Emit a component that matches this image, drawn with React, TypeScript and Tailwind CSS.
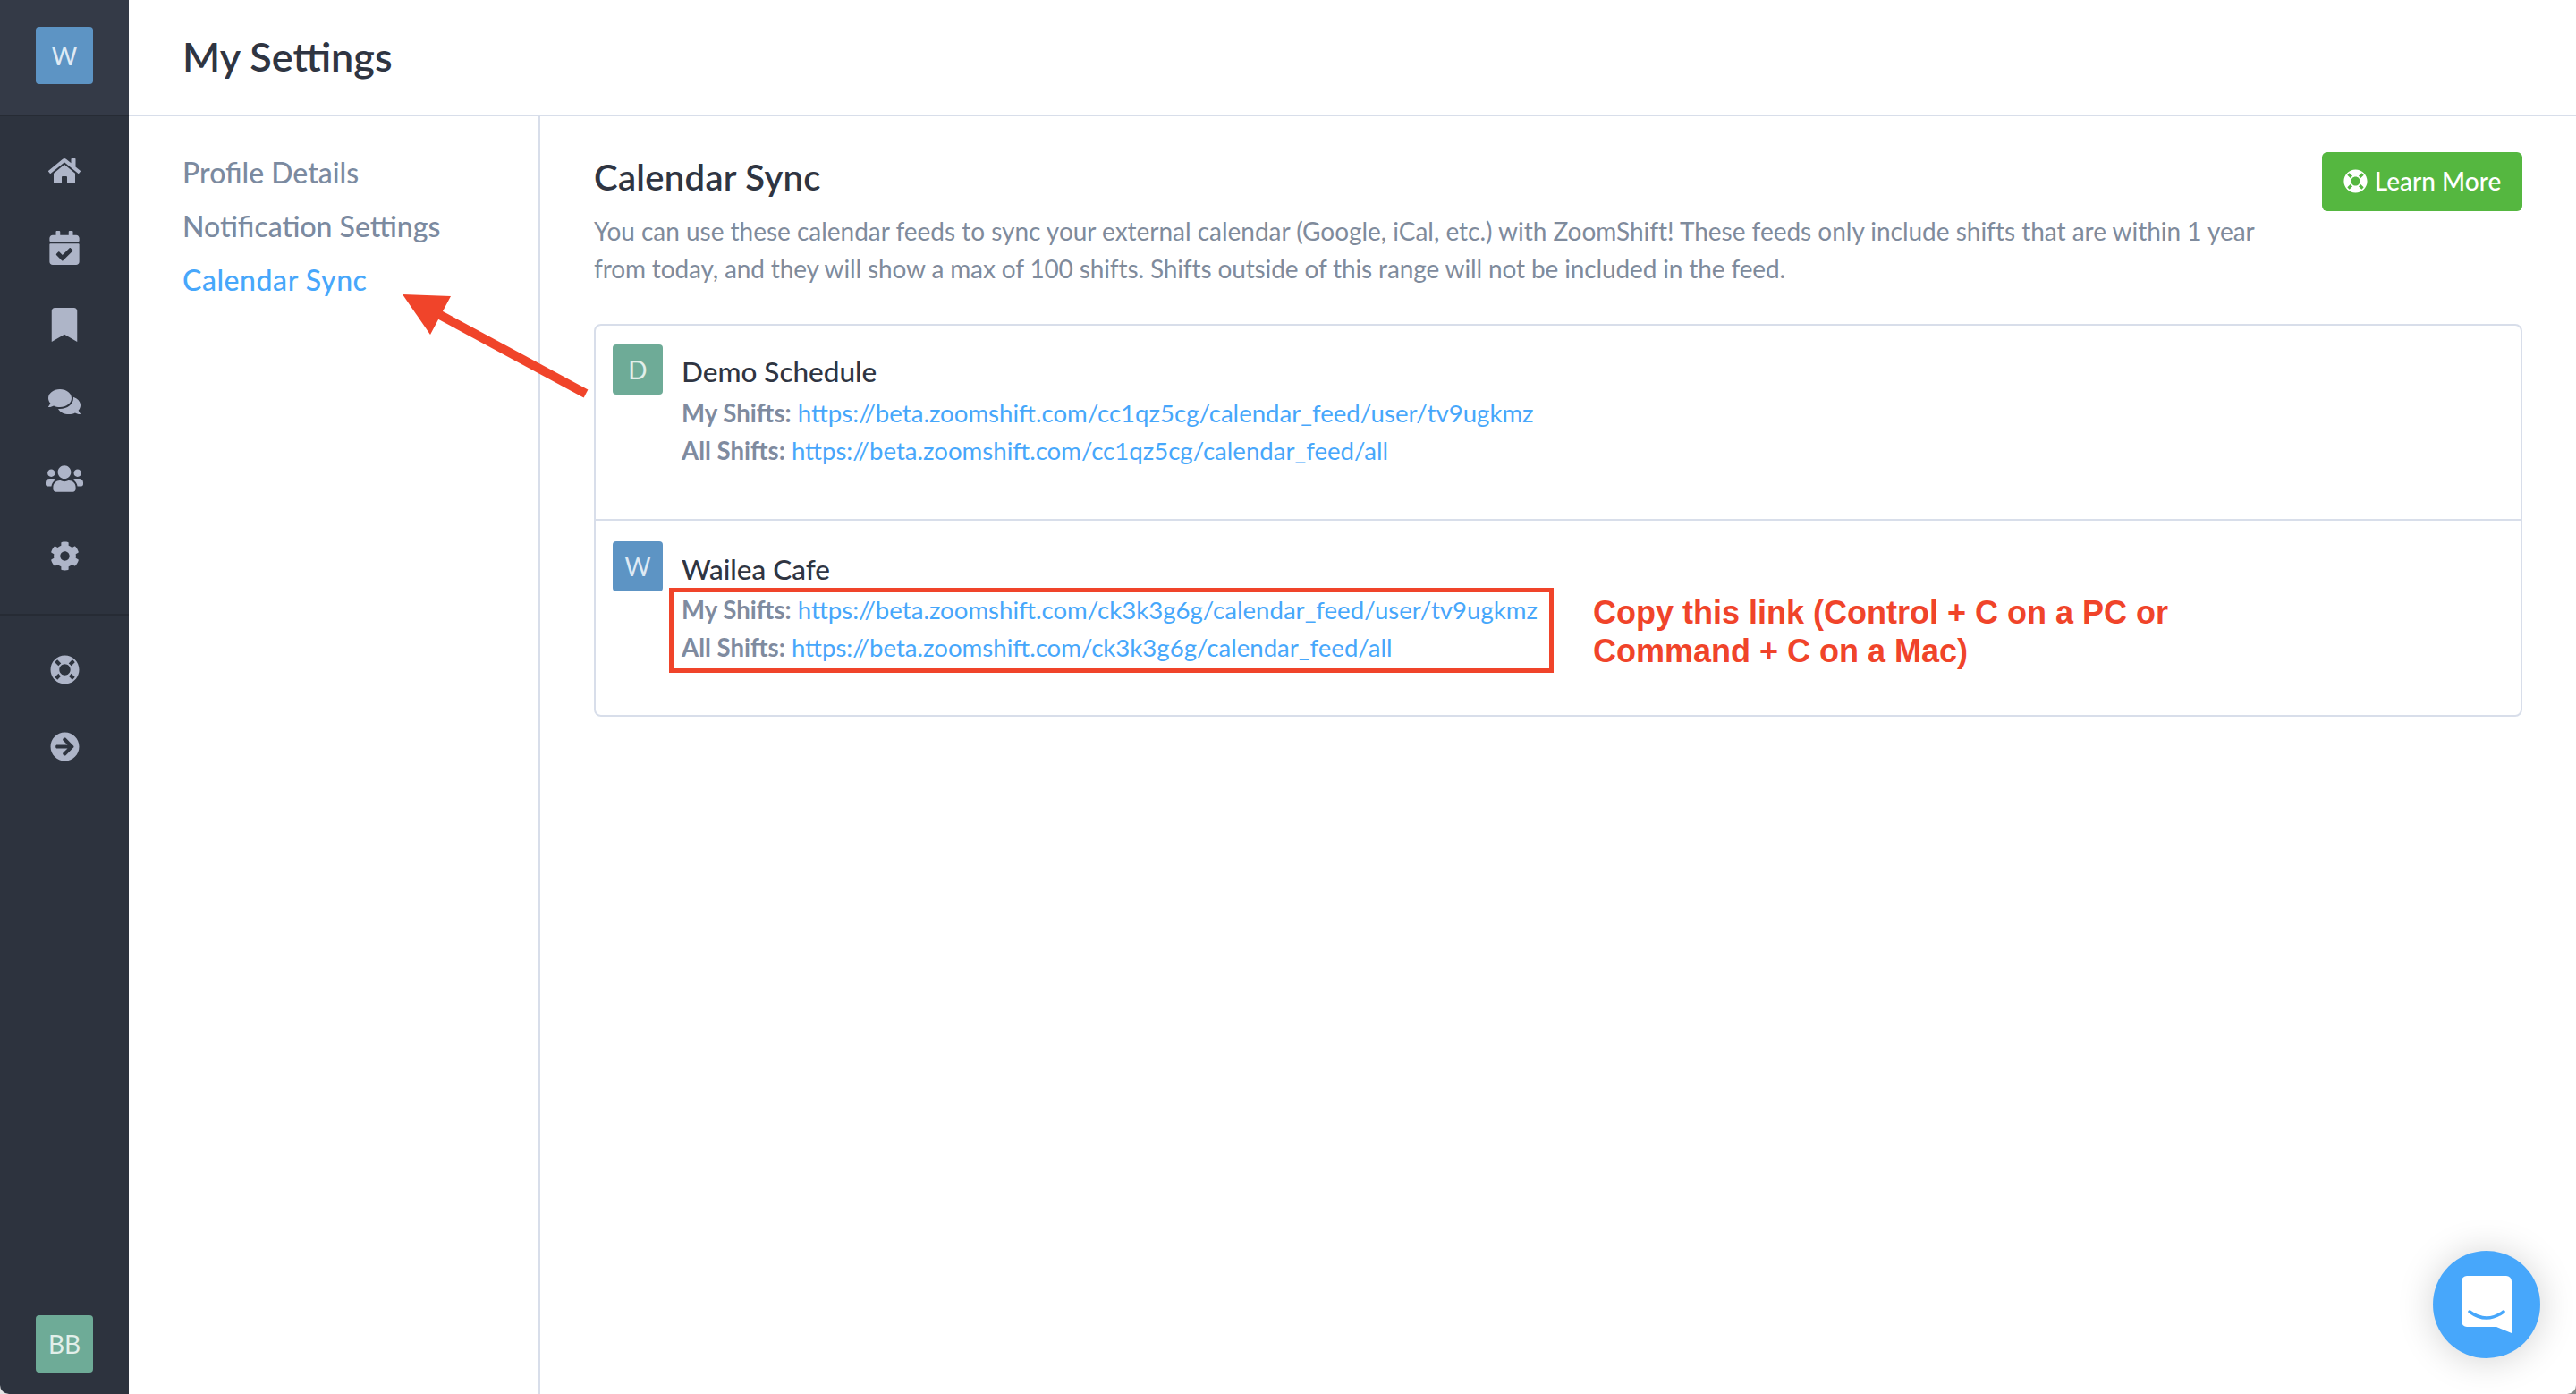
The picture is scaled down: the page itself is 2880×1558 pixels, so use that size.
import { FaHome, FaCalendarCheck, FaBookmark, FaComments, FaUsers, FaCog, FaLifeRing, FaArrowCircleRight } from "react-icons/fa";

const F = "font-['Lato','Noto_Sans',sans-serif]";

function Side({ children }: { children: React.ReactNode }) {
  return <div className="h-[86px] flex items-center justify-center text-[#aeb5c8]">{children}</div>;
}

function Row({ label, url }: { label: string; url: string }) {
  return (
    <div className="h-[42px] leading-[42px] text-[27.6px] whitespace-nowrap">
      <span className="font-bold text-[#7f8b9f]">{label}</span>{" "}
      <span className="text-[#47a7fb]">{url}</span>
    </div>
  );
}

export default function App() {
  return (
    <div className="h-[1558px] w-full bg-[linear-gradient(90deg,#e4e4e4_50%,#8a8a8a_50%)] overflow-hidden">
      <div className={`h-full w-full flex bg-white overflow-hidden relative rounded-b-[10px] ${F}`}>
        <aside className="w-[144px] shrink-0 flex flex-col bg-[#2d333e]">
          <div className="h-[130px] shrink-0 bg-[#343a47] flex items-center justify-center border-b-2 border-[#262b34] pb-[4px]">
            <div className="w-[64px] h-[64px] rounded-[4px] bg-[#5d94c4] flex items-center justify-center text-[28px] text-[#dfeaf4]">W</div>
          </div>
          <div className="pt-[18px] flex flex-col">
            <Side><FaHome size={36} /></Side>
            <Side><FaCalendarCheck size={38} /></Side>
            <Side><FaBookmark size={38} /></Side>
            <Side><FaComments size={36} /></Side>
            <Side><FaUsers size={42} /></Side>
            <Side><FaCog size={33} /></Side>
          </div>
          <div className="mt-[22px] h-[2px] bg-[#262b34]" />
          <div className="pt-[17px] flex flex-col">
            <Side><FaLifeRing size={33} /></Side>
            <Side><FaArrowCircleRight size={33} /></Side>
          </div>
          <div className="mt-auto mb-[24px] mx-auto w-[64px] h-[64px] rounded-[4px] bg-[#6eab97] flex items-center justify-center text-[28px] text-[#e2efea]">BB</div>
        </aside>
        <main className="flex-1 flex flex-col min-w-0">
          <header className="h-[130px] shrink-0 border-b-2 border-[#d8deea] pl-[60px] flex items-center">
            <h1 className="text-[45px] font-semibold text-[#2f3542]">My Settings</h1>
          </header>
          <div className="flex-1 flex min-h-0">
            <nav className="w-[460px] shrink-0 border-r-2 border-[#d8deea] pl-[60px] pt-[33px] text-[32px] font-medium text-[#7b8aa0]">
              <div className="h-[60px] leading-[60px]">Profile Details</div>
              <div className="h-[60px] leading-[60px]">Notification Settings</div>
              <div className="h-[60px] leading-[60px] text-[#47a7fb] tracking-[0.55px]">Calendar Sync</div>
            </nav>
            <section className="flex-1 pl-[60px] pr-[60px] pt-[40px] min-w-0">
              <div className="flex items-start justify-between">
                <div className="pt-[5px]">
                  <h2 className="h-[46px] leading-[46px] text-[40px] font-semibold text-[#2f3542] tracking-[0.3px]">Calendar Sync</h2>
                  <p className="mt-[16px] text-[28px] leading-[42px] text-[#7f8b9c] whitespace-nowrap">
                    <span className="tracking-[-0.02px]">You can use these calendar feeds to sync your external calendar (Google, iCal, etc.) with ZoomShift! These feeds only include shifts that are within 1 year</span>
                    <br />
                    <span className="tracking-[-0.13px]">from today, and they will show a max of 100 shifts. Shifts outside of this range will not be included in the feed.</span>
                  </p>
                </div>
                <button className="w-[224px] h-[66px] rounded-[6px] bg-[#55b740] text-white text-[28px] font-medium flex items-center justify-center gap-[8px] pb-[2px]">
                  <FaLifeRing size={27} />
                  <span>Learn More</span>
                </button>
              </div>
              <div className="mt-[41px] border-2 border-[#d8deea] rounded-[8px] h-[439px] flex flex-col">
                <div className="h-[218px] shrink-0 border-b-2 border-[#d8deea] pl-[19px] pt-[21px] flex gap-[21px]">
                  <div className="w-[56px] h-[56px] rounded-[4px] bg-[#6eab97] flex items-center justify-center text-[28px] text-[#e2efea]">D</div>
                  <div className="pt-[9px]">
                    <div className="h-[42px] leading-[42px] text-[31.5px] font-medium text-[#2f3542] mb-[5px]">Demo Schedule</div>
                    <Row label="My Shifts:" url="https://beta.zoomshift.com/cc1qz5cg/calendar_feed/user/tv9ugkmz" />
                    <Row label="All Shifts:" url="https://beta.zoomshift.com/cc1qz5cg/calendar_feed/all" />
                  </div>
                </div>
                <div className="pl-[19px] pt-[23px] flex gap-[21px]">
                  <div className="w-[56px] h-[56px] rounded-[4px] bg-[#5d94c4] flex items-center justify-center text-[28px] text-[#dfeaf4]">W</div>
                  <div className="pt-[10px]">
                    <div className="h-[42px] leading-[42px] text-[31.5px] font-medium text-[#2f3542] mb-[4px]">Wailea Cafe</div>
                    <div className="relative">
                      <Row label="My Shifts:" url="https://beta.zoomshift.com/ck3k3g6g/calendar_feed/user/tv9ugkmz" />
                      <Row label="All Shifts:" url="https://beta.zoomshift.com/ck3k3g6g/calendar_feed/all" />
                      <div className="absolute left-[-14px] top-[-4px] w-[989px] h-[95px] border-[5px] border-[#f0442a]" />
                      <div className="absolute left-[1019px] top-[2px] font-['Liberation_Sans',sans-serif] font-bold text-[36px] leading-[43px] text-[#f0442a] whitespace-nowrap">
                        Copy this link (Control + C on a PC or
                        <br />
                        Command + C on a Mac)
                      </div>
                    </div>
                  </div>
                </div>
              </div>
            </section>
          </div>
        </main>
        <svg className="absolute left-[440px] top-[320px] pointer-events-none" width="230" height="130" viewBox="440 320 230 130">
          <polygon points="450,329 504,331 481,374" fill="#f0442a" />
          <line x1="490" y1="351" x2="655" y2="440" stroke="#f0442a" strokeWidth="10" />
        </svg>
        <div className="absolute left-[2720px] top-[1398px] w-[120px] h-[120px] rounded-full bg-[#47a7fb] shadow-[0_2px_40px_rgba(0,0,0,0.18)] flex items-center justify-center">
          <svg width="56" height="64" viewBox="0 0 56 64">
            <path d="M6 0H50a6 6 0 0 1 6 6V64L39 57H6a6 6 0 0 1-6-6V6a6 6 0 0 1 6-6Z" fill="#fff" />
            <path d="M9 40Q28 54 47 40" fill="none" stroke="#47a7fb" strokeWidth="3.5" strokeLinecap="round" />
          </svg>
        </div>
      </div>
    </div>
  );
}
